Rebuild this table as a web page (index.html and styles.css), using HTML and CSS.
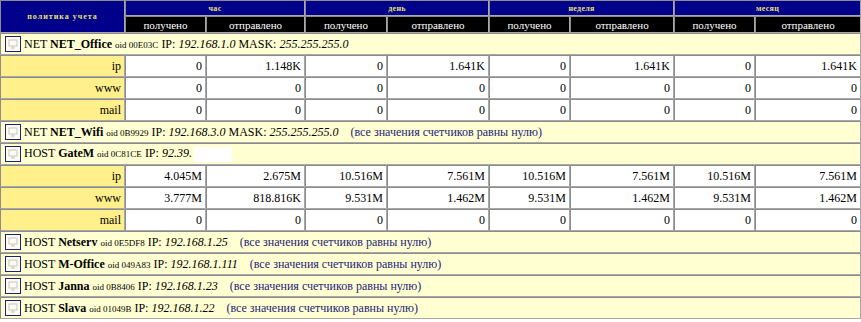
FILE: index.html
```html
<!DOCTYPE html>
<html>
<head>
<meta charset="utf-8">
<link rel="stylesheet" href="styles.css">
</head>
<body>
<table class="stats">
  <colgroup>
    <col class="c-label"><col class="c81"><col class="c99"><col class="c82"><col class="c102"><col class="c81"><col class="c104"><col class="c81"><col class="c106">
  </colgroup>
  <thead>
    <tr class="h1">
      <th rowspan="2" class="policy">политика учета</th>
      <th colspan="2" class="period">час</th>
      <th colspan="2" class="period">день</th>
      <th colspan="2" class="period">неделя</th>
      <th colspan="2" class="period">месяц</th>
    </tr>
    <tr class="h2">
      <th>получено</th><th>отправлено</th>
      <th>получено</th><th>отправлено</th>
      <th>получено</th><th>отправлено</th>
      <th>получено</th><th>отправлено</th>
    </tr>
  </thead>
  <tbody>
    <tr class="host"><td colspan="9"><span class="ico"><svg width="16" height="16" viewBox="0 0 16 16"><rect x="0.5" y="0.5" width="15" height="15" fill="#fbfbf4" stroke="#1c2470"/><rect x="4" y="4" width="8" height="6" fill="none" stroke="#c8c8c0"/><path d="M6 12h4M8 10v2" stroke="#c8c8c0"/></svg></span><span class="txt">NET <b>NET_Office</b> <span class="oid">oid 00E03C</span> IP: <i>192.168.1.0</i> MASK: <i>255.255.255.0</i></span></td></tr>
    <tr class="data"><td class="lbl">ip</td><td>0</td><td>1.148K</td><td>0</td><td>1.641K</td><td>0</td><td>1.641K</td><td>0</td><td>1.641K</td></tr>
    <tr class="data"><td class="lbl">www</td><td>0</td><td>0</td><td>0</td><td>0</td><td>0</td><td>0</td><td>0</td><td>0</td></tr>
    <tr class="data"><td class="lbl">mail</td><td>0</td><td>0</td><td>0</td><td>0</td><td>0</td><td>0</td><td>0</td><td>0</td></tr>
    <tr class="host"><td colspan="9"><span class="ico"><svg width="16" height="16" viewBox="0 0 16 16"><rect x="0.5" y="0.5" width="15" height="15" fill="#fbfbf4" stroke="#1c2470"/><rect x="4" y="4" width="8" height="6" fill="none" stroke="#c8c8c0"/><path d="M6 12h4M8 10v2" stroke="#c8c8c0"/></svg></span><span class="txt">NET <b>NET_Wifi</b> <span class="oid">oid 0B9929</span> IP: <i>192.168.3.0</i> MASK: <i>255.255.255.0</i> <span class="zero">(все значения счетчиков равны нулю)</span></span></td></tr>
    <tr class="host"><td colspan="9"><span class="ico"><svg width="16" height="16" viewBox="0 0 16 16"><rect x="0.5" y="0.5" width="15" height="15" fill="#fbfbf4" stroke="#1c2470"/><rect x="4" y="4" width="8" height="6" fill="none" stroke="#c8c8c0"/><path d="M6 12h4M8 10v2" stroke="#c8c8c0"/></svg></span><span class="txt">HOST <b>GateM</b> <span class="oid">oid 0C81CE</span> IP: <i>92.39.</i><span class="redact"></span></span></td></tr>
    <tr class="data"><td class="lbl">ip</td><td>4.045M</td><td>2.675M</td><td>10.516M</td><td>7.561M</td><td>10.516M</td><td>7.561M</td><td>10.516M</td><td>7.561M</td></tr>
    <tr class="data"><td class="lbl">www</td><td>3.777M</td><td>818.816K</td><td>9.531M</td><td>1.462M</td><td>9.531M</td><td>1.462M</td><td>9.531M</td><td>1.462M</td></tr>
    <tr class="data"><td class="lbl">mail</td><td>0</td><td>0</td><td>0</td><td>0</td><td>0</td><td>0</td><td>0</td><td>0</td></tr>
    <tr class="host"><td colspan="9"><span class="ico"><svg width="16" height="16" viewBox="0 0 16 16"><rect x="0.5" y="0.5" width="15" height="15" fill="#fbfbf4" stroke="#1c2470"/><rect x="4" y="4" width="8" height="6" fill="none" stroke="#c8c8c0"/><path d="M6 12h4M8 10v2" stroke="#c8c8c0"/></svg></span><span class="txt">HOST <b>Netserv</b> <span class="oid">oid 0E5DF8</span> IP: <i>192.168.1.25</i> <span class="zero">(все значения счетчиков равны нулю)</span></span></td></tr>
    <tr class="host"><td colspan="9"><span class="ico"><svg width="16" height="16" viewBox="0 0 16 16"><rect x="0.5" y="0.5" width="15" height="15" fill="#fbfbf4" stroke="#1c2470"/><rect x="4" y="4" width="8" height="6" fill="none" stroke="#c8c8c0"/><path d="M6 12h4M8 10v2" stroke="#c8c8c0"/></svg></span><span class="txt">HOST <b>M-Office</b> <span class="oid">oid 049A83</span> IP: <i>192.168.1.111</i> <span class="zero">(все значения счетчиков равны нулю)</span></span></td></tr>
    <tr class="host"><td colspan="9"><span class="ico"><svg width="16" height="16" viewBox="0 0 16 16"><rect x="0.5" y="0.5" width="15" height="15" fill="#fbfbf4" stroke="#1c2470"/><rect x="4" y="4" width="8" height="6" fill="none" stroke="#c8c8c0"/><path d="M6 12h4M8 10v2" stroke="#c8c8c0"/></svg></span><span class="txt">HOST <b>Janna</b> <span class="oid">oid 0B8406</span> IP: <i>192.168.1.23</i> <span class="zero">(все значения счетчиков равны нулю)</span></span></td></tr>
    <tr class="host"><td colspan="9"><span class="ico"><svg width="16" height="16" viewBox="0 0 16 16"><rect x="0.5" y="0.5" width="15" height="15" fill="#fbfbf4" stroke="#1c2470"/><rect x="4" y="4" width="8" height="6" fill="none" stroke="#c8c8c0"/><path d="M6 12h4M8 10v2" stroke="#c8c8c0"/></svg></span><span class="txt">HOST <b>Slava</b> <span class="oid">oid 01049B</span> IP: <i>192.168.1.22</i> <span class="zero">(все значения счетчиков равны нулю)</span></span></td></tr>
  </tbody>
</table>
</body>
</html>
```
FILE: styles.css
```css
html, body {
  margin: 0;
  padding: 0;
  background: #ffffff;
  font-family: "Liberation Serif", "Times New Roman", serif;
}
.stats {
  width: 861px;
  table-layout: fixed;
  border-collapse: separate;
  border-spacing: 0;
  color: #000;
}
.stats th, .stats td {
  font-family: "Liberation Serif", "Times New Roman", serif;
}
.c-label { width: 125px; }
.c81 { width: 81px; }
.c82 { width: 82px; }
.c99 { width: 99px; }
.c102 { width: 102px; }
.c104 { width: 104px; }
.c106 { width: 106px; }

.stats th, .stats td {
  border-top: 1px solid #8c8c8c;
  border-left: 1px solid #8c8c8c;
  border-right: 1px solid #a8a8a8;
  border-bottom: 1px solid #a8a8a8;
  padding: 0 3px;
  white-space: nowrap;
  overflow: hidden;
}
.h1 { height: 16px; }
.h2 { height: 17px; }
.h1 th {
  background: #00008a;
  color: #e8e070;
  font-size: 8px;
  font-weight: bold;
  text-align: center;
  letter-spacing: 0.3px;
}
.h1 th.policy {
  letter-spacing: 1px;
  vertical-align: middle;
}
.h2 th {
  background: #000000;
  color: #ffffff;
  font-size: 11px;
  font-weight: normal;
  text-align: center;
}
.data { height: 22px; }
.data td {
  background: #ffffff;
  text-align: right;
  font-size: 12px;
}
.data td.lbl {
  background: #fff08c;
}
.host { height: 22px; }
.host td {
  background: #ffffd2;
  padding: 0 4px;
  font-size: 12px;
}
.ico {
  display: inline-block;
  width: 16px;
  height: 16px;
  vertical-align: middle;
  margin-right: 3px;
}
.ico svg { display: block; }
.txt { vertical-align: middle; }
.stats .oid { font-size: 9px; }
.stats .zero {
  color: #1c1c78;
  font-size: 12px;
  margin-left: 9px;
}
.redact {
  display: inline-block;
  width: 38px;
  height: 15px;
  background: #ffffff;
  vertical-align: middle;
  margin-left: 2px;
}
```
